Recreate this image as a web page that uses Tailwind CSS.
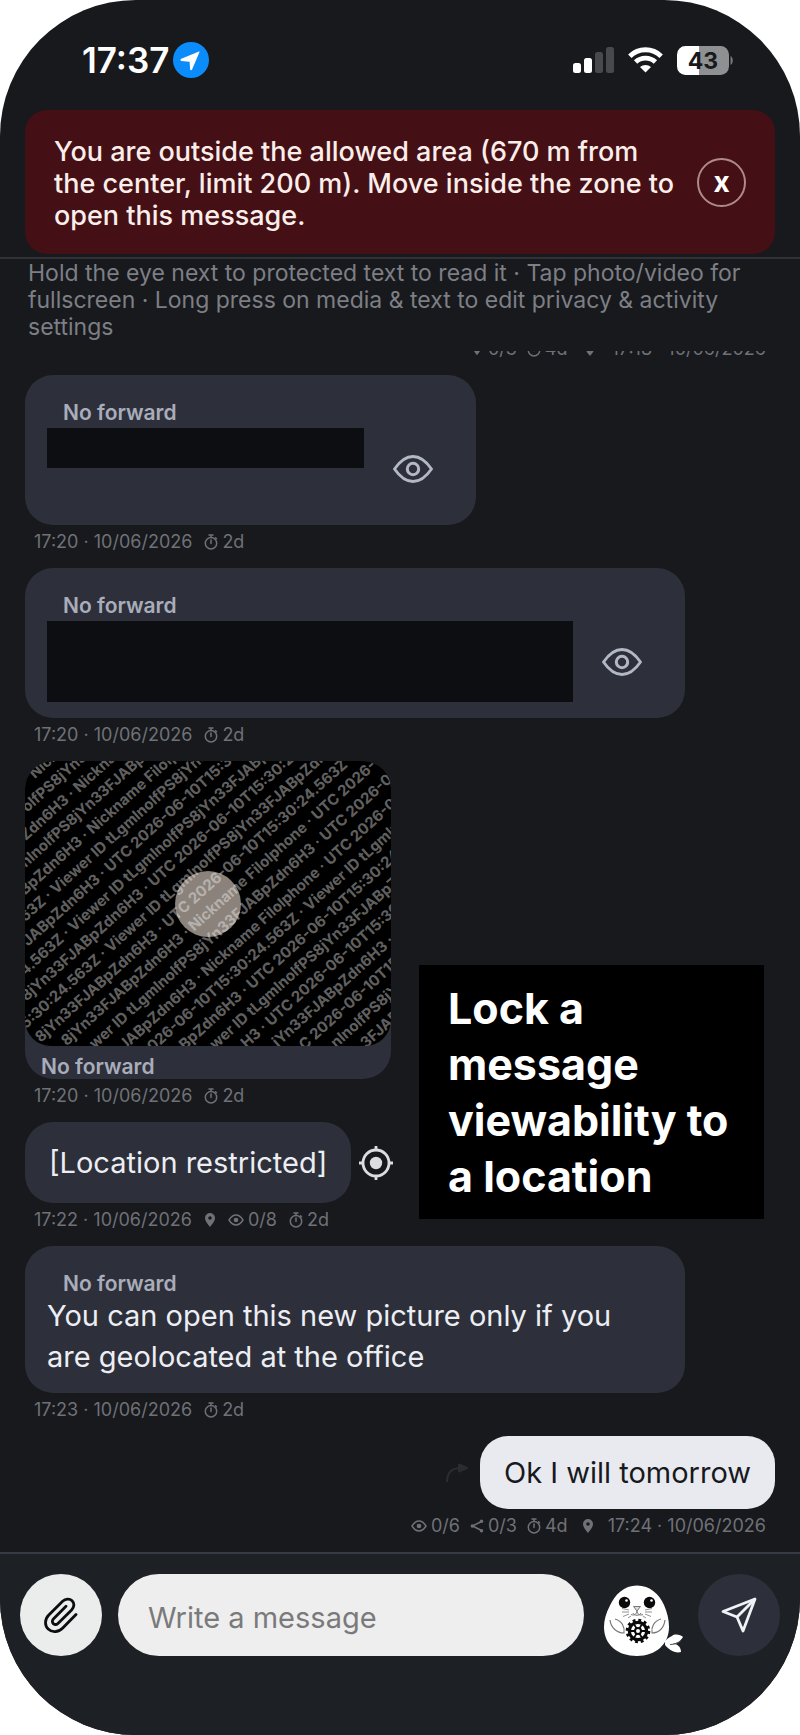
<!DOCTYPE html>
<html lang="en">
<head>
    <meta charset="UTF-8">
    <meta name="viewport" content="width=device-width, initial-scale=1.0">
    <title>Chat</title>
    <script src="https://cdn.jsdelivr.net/npm/@tailwindcss/browser@4"></script>
</head>
<body class="bg-white font-['Inter','Liberation_Sans',sans-serif]">
    <!-- shared icons -->
    <svg class="hidden" aria-hidden="true">
        <symbol id="eye" viewBox="0 0 40 28">
            <path d="M1.500 14C7 6 13 1.500 20 1.500S33 6 38.500 14C33 22 27 26.500 20 26.500S7 22 1.500 14Z" fill="none" stroke="currentColor" stroke-width="2.900" stroke-linejoin="round"/>
            <circle cx="20" cy="14" r="5.700" fill="none" stroke="currentColor" stroke-width="3"/>
        </symbol>
        <symbol id="eye-small" viewBox="0 0 16 12">
            <path d="M1 6C3 2.800 5.300 1 8 1s5 1.800 7 5c-2 3.200-4.300 5-7 5S3 9.200 1 6Z" fill="none" stroke="currentColor" stroke-width="1.500" stroke-linejoin="round"/>
            <circle cx="8" cy="6" r="2.300" fill="currentColor"/>
        </symbol>
        <symbol id="timer" viewBox="0 0 14 16">
            <circle cx="7" cy="9.300" r="5.700" fill="none" stroke="currentColor" stroke-width="1.500"/>
            <path d="M5 1h4M7 1v2.500M7 6v3.500M11.500 3.800l1 1" fill="none" stroke="currentColor" stroke-width="1.500" stroke-linecap="round"/>
        </symbol>
        <symbol id="pin" viewBox="0 0 12 16">
            <path fill-rule="evenodd" d="M6 1a5 5 0 0 0-5 5c0 3.500 5 9 5 9s5-5.500 5-9a5 5 0 0 0-5-5Zm0 3.200a1.800 1.800 0 1 1 0 3.600 1.800 1.800 0 0 1 0-3.600Z" fill="currentColor"/>
        </symbol>
        <symbol id="share" viewBox="0 0 14 14">
            <path d="M11.500 2.500 2.500 7l9 4.500" fill="none" stroke="currentColor" stroke-width="1.500"/>
            <circle cx="11.500" cy="2.300" r="1.700" fill="currentColor"/>
            <circle cx="2.300" cy="7" r="1.700" fill="currentColor"/>
            <circle cx="11.500" cy="11.700" r="1.700" fill="currentColor"/>
        </symbol>
    </svg>

    <div class="min-h-screen flex flex-col rounded-[136px] overflow-hidden bg-[#17191d] text-[#eceef3]">

        <!-- status bar -->
        <div class="h-[110px] pl-[82px] pr-[66px] flex items-center justify-between">
            <div class="flex items-center gap-1 pt-2.5">
                <span class="text-[35px] leading-10 font-semibold text-white">17:37</span>
                <svg class="size-9" viewBox="0 0 36 36">
                    <circle cx="18" cy="18" r="18" fill="#0b8cfb"/>
                    <path d="M26 9.500 8.300 16.800c-1.200.5-1.100 2 .1 2.100l8.200.8.500 7.600c.1 1.200 1.500 1.400 2 .3L26.500 10c.2-.4-.1-.7-.5-.5Z" fill="#fff"/>
                </svg>
            </div>
            <div class="flex items-center gap-[14px] pt-2.5">
                <svg class="w-[41px] h-[26px]" viewBox="0 0 41 26">
                    <rect x="0" y="16" width="8" height="10" rx="2.500" fill="#fff"/>
                    <rect x="11" y="11" width="8" height="15" rx="2.500" fill="#fff"/>
                    <rect x="22" y="5" width="8" height="21" rx="2.500" fill="#47494c"/>
                    <rect x="33" y="0" width="8" height="26" rx="2.500" fill="#47494c"/>
                </svg>
                <svg class="w-[35px] h-[26px]" viewBox="0 0 35 26" fill="none" stroke="#fff" stroke-width="4.800">
                    <path d="M1.800 9.200C10.500.6 24.500.6 33.200 9.200"/>
                    <path d="M7.600 15c5.500-5.300 14.300-5.300 19.800 0"/>
                    <path d="M17.500 25.500 12 20c3.200-2.800 7.800-2.800 11 0Z" fill="#fff" stroke="none"/>
                </svg>
                <svg class="w-[57px] h-[29px]" viewBox="0 0 57 29">
                    <path d="M8.500 0H22v29H8.500A8.500 8.500 0 0 1 0 20.500v-12A8.500 8.500 0 0 1 8.500 0Z" fill="#fff"/>
                    <path d="M22 0h21.500A8.500 8.500 0 0 1 52 8.500v12a8.500 8.500 0 0 1-8.500 8.500H22Z" fill="#8f9092"/>
                    <path d="M53.500 10c3 1 3 8 0 9Z" fill="#77787b"/>
                    <text x="26" y="22.500" text-anchor="middle" font-size="23" font-weight="700" fill="#17191d">43</text>
                </svg>
            </div>
        </div>

        <!-- out of zone alert -->
        <div role="alert" class="mx-[25px] py-6 pl-[29px] pr-[29px] rounded-[22px] bg-[#441015] flex items-center gap-3">
            <p class="flex-1 pt-0.5 -mb-0.5 text-[27px] leading-8 font-medium text-[#fbeeea]">You are outside the allowed area (670 m from<br>the center, limit 200 m). Move inside the zone to open this message.</p>
            <button type="button" aria-label="Close" class="size-[49px] shrink-0 rounded-full border-2 border-[#b08a8b] text-[28px] leading-none font-bold text-white">x</button>
        </div>

        <div class="mt-[3px] border-t-2 border-[#303237] px-[28px] pt-px pb-[9px]">
            <p class="text-[23px] leading-[27px] text-[#7d7f85]">Hold the eye next to protected text to read it · Tap photo/video for fullscreen · Long press on media &amp; text to edit privacy &amp; activity settings</p>
        </div>

        <main class="relative flex flex-col gap-4 px-[25px] pt-px pb-4">
            <!-- message scrolled under the hint -->
            <div class="h-[8px] px-[9px] overflow-hidden flex items-end justify-end gap-2.5 text-[18px] leading-5 text-[#6f7177]">
                <span class="flex items-center gap-1"><svg class="size-[14px]"><use href="#pin"/></svg>0/3</span>
                <span class="flex items-center gap-1"><svg class="w-[14px] h-4"><use href="#timer"/></svg>4d</span>
                <svg class="w-3 h-4 mx-1.5 mb-0.5"><use href="#pin"/></svg>
                <span>17:18 · 10/06/2026</span>
            </div>

            <article class="flex flex-col items-start gap-[7px]">
                <div class="pt-6 pb-4 pl-[22px] pr-[30px] rounded-[28px] bg-[#2d303a]">
                    <p class="pl-4 pb-0.5 text-[21px] leading-[27px] font-semibold text-[#a9adba]">No forward</p>
                    <div class="flex gap-4">
                        <div class="w-[317px] h-10 bg-[#0d0e12]"></div>
                        <button type="button" aria-label="Show text" class="w-[66px] h-[81px] flex items-center justify-center text-[#b3b8c6]"><svg class="w-10 h-7"><use href="#eye"/></svg></button>
                    </div>
                </div>
                <div class="px-[9px] flex items-center gap-3 text-[18px] leading-5 text-[#6f7177]">
                    <span>17:20 · 10/06/2026</span>
                    <span class="flex items-center gap-1"><svg class="w-[14px] h-4"><use href="#timer"/></svg>2d</span>
                </div>
            </article>

            <article class="flex flex-col items-start gap-[7px]">
                <div class="w-[88%] pt-6 pb-4 pl-[22px] pr-[30px] rounded-[28px] bg-[#2d303a]">
                    <p class="pl-4 pb-0.5 text-[21px] leading-[27px] font-semibold text-[#a9adba]">No forward</p>
                    <div class="flex gap-4">
                        <div class="flex-1 h-[81px] bg-[#0d0e12]"></div>
                        <button type="button" aria-label="Show text" class="w-[66px] h-[81px] flex items-center justify-center text-[#b3b8c6]"><svg class="w-10 h-7"><use href="#eye"/></svg></button>
                    </div>
                </div>
                <div class="px-[9px] flex items-center gap-3 text-[18px] leading-5 text-[#6f7177]">
                    <span>17:20 · 10/06/2026</span>
                    <span class="flex items-center gap-1"><svg class="w-[14px] h-4"><use href="#timer"/></svg>2d</span>
                </div>
            </article>

            <article class="flex flex-col items-start gap-[7px]">
                <div class="w-[366px] rounded-[28px] overflow-hidden bg-[#2d303a]">
                    <!-- media with watermark -->
                    <svg class="block w-full h-auto rounded-[26px] bg-black" viewBox="0 0 366 285">
                        <circle cx="183" cy="143" r="33" fill="#8a827b"/>
                        <g transform="rotate(-42)" font-size="15" font-weight="700" fill="#fff" fill-opacity=".4">
                            <text x="-5" y="20">Nickname</text>
                            <text x="-33" y="40">olfPS8jYn33FJAB</text>
                            <text x="-53" y="60">Zdn6H3 · Nickname Filolphone</text>
                            <text x="-71" y="80">nlnolfPS8jYn33FJABpZdn6H3</text>
                            <text x="-90" y="100">BpZdn6H3 · Nickname Filolphone</text>
                            <text x="-108" y="120">63Z · Viewer ID tLgmlnolfPS8jYn33FJAB</text>
                            <text x="-122" y="140">JABpZdn6H3 · UTC 2026-06-10T15:30:24</text>
                            <text x="-144" y="160">4.563Z · Viewer ID tLgmlnolfPS8jYn33FJABpZdn6H3</text>
                            <text x="-160" y="180">8jYn33FJABpZdn6H3 · UTC 2026-06-10T15:30:24.563Z</text>
                            <text x="-179" y="200">5:30:24.563Z · Viewer ID tLgmlnolfPS8jYn33FJABpZdn6H3</text>
                            <text x="-177" y="220">8jYn33FJABpZdn6H3 · UTC 2026-06-10T15:30:24.563Z</text>
                            <text x="-160" y="240">8jYn33FJABpZdn6H3 · Nickname Filolphone · UTC 2026-06</text>
                            <text x="-141" y="261">wer ID tLgmlnolfPS8jYn33FJABpZdn6H3 · UTC 2026-06-10</text>
                            <text x="-120" y="282">JABpZdn6H3 · Nickname Filolphone · UTC 2026-06-10</text>
                            <text x="-100" y="302">026-06-10T15:30:24.563Z · Viewer ID tLgmlnolf</text>
                            <text x="-75" y="322">BpZdn6H3 · UTC 2026-06-10T15:30:24.563Z</text>
                            <text x="-52" y="342">wer ID tLgmlnolfPS8jYn33FJABpZdn6H3</text>
                            <text x="-28" y="362">H3 · UTC 2026-06-10T15:30:24</text>
                            <text x="-4" y="382">jYn33FJABpZdn6H3 · UTC</text>
                            <text x="14" y="402">C 2026-06-10T15:30</text>
                            <text x="39" y="422">nlnolfPS8jYn</text>
                            <text x="61" y="442">3FJABp</text>
                        </g>
                    </svg>
                    <p class="pt-[9px] pl-4 text-[21px] leading-6 font-semibold text-[#a9adba]">No forward</p>
                </div>
                <div class="px-[9px] flex items-center gap-3 text-[18px] leading-5 text-[#6f7177]">
                    <span>17:20 · 10/06/2026</span>
                    <span class="flex items-center gap-1"><svg class="w-[14px] h-4"><use href="#timer"/></svg>2d</span>
                </div>
            </article>

            <article class="flex flex-col items-start gap-[7px]">
                <div class="flex items-center gap-2">
                    <p class="px-6 py-5 rounded-[28px] bg-[#2d303a] text-[29px] leading-[41px]">[Location restricted]</p>
                    <button type="button" aria-label="Check location">
                        <svg class="size-[34px]" viewBox="0 0 34 34" fill="none" stroke="#dcdde1" stroke-width="2.800">
                            <circle cx="17" cy="17" r="13"/>
                            <circle cx="17" cy="17" r="6.200" fill="#dcdde1" stroke="none"/>
                            <path d="M17 0v5M17 29v5M0 17h5M29 17h5"/>
                        </svg>
                    </button>
                </div>
                <div class="px-[9px] flex items-center gap-3 text-[18px] leading-5 text-[#6f7177]">
                    <span>17:22 · 10/06/2026</span>
                    <svg class="w-3 h-4"><use href="#pin"/></svg>
                    <span class="flex items-center gap-1"><svg class="w-4 h-3"><use href="#eye-small"/></svg>0/8</span>
                    <span class="flex items-center gap-1"><svg class="w-[14px] h-4"><use href="#timer"/></svg>2d</span>
                </div>
            </article>

            <article class="flex flex-col items-start gap-[7px]">
                <div class="w-[88%] pt-6 pb-4 px-[22px] rounded-[28px] bg-[#2d303a]">
                    <p class="pl-4 pb-0.5 text-[21px] leading-[27px] font-semibold text-[#a9adba]">No forward</p>
                    <p class="-mt-1 max-w-[590px] text-[29px] leading-[41px]">You can open this new picture only if you are geolocated at the office</p>
                </div>
                <div class="px-[9px] flex items-center gap-3 text-[18px] leading-5 text-[#6f7177]">
                    <span>17:23 · 10/06/2026</span>
                    <span class="flex items-center gap-1"><svg class="w-[14px] h-4"><use href="#timer"/></svg>2d</span>
                </div>
            </article>

            <article class="flex flex-col items-end gap-[7px]">
                <div class="flex items-center gap-3">
                    <svg class="w-[22px] h-5" viewBox="0 0 22 20" fill="none" stroke="#2a2c30" stroke-width="2">
                        <path d="M1 19C1 10 6 5 15 5"/>
                        <path d="M13 1.500 21 5l-8 3.500Z" fill="#2a2c30" stroke-linejoin="round"/>
                    </svg>
                    <p class="px-6 py-4 rounded-[28px] bg-[#e9eaef] text-[29px] leading-[41px] text-[#17191d]">Ok I will tomorrow</p>
                </div>
                <div class="px-[9px] flex items-center gap-2.5 text-[18px] leading-5 text-[#6f7177]">
                    <span class="flex items-center gap-1"><svg class="w-4 h-3"><use href="#eye-small"/></svg>0/6</span>
                    <span class="flex items-center gap-1"><svg class="size-[14px]"><use href="#share"/></svg>0/3</span>
                    <span class="flex items-center gap-1"><svg class="w-[14px] h-4"><use href="#timer"/></svg>4d</span>
                    <svg class="w-3 h-4 mx-1"><use href="#pin"/></svg>
                    <span>17:24 · 10/06/2026</span>
                </div>
            </article>

            <!-- caption laid over the conversation -->
            <div class="absolute top-[615px] right-9 w-[345px] px-[29px] pt-[15px] pb-[15px] bg-black text-[43px] leading-[56px] font-bold text-white">Lock a message viewability to a location</div>
        </main>

        <!-- composer -->
        <form class="flex-1 border-t-2 border-[#373a44] bg-[#1d2024] px-5 pt-5 flex items-start gap-4">
            <button type="button" aria-label="Attach a file" class="size-[82px] shrink-0 rounded-full bg-[#ebecec] flex items-center justify-center">
                <svg class="size-9" viewBox="0 0 36 36" fill="none" stroke="#0c0d10" stroke-width="2.800" stroke-linecap="round" stroke-linejoin="round">
                    <path d="M33 17.500 19.500 31.200c-4.200 4.200-10.500 4.500-14.300.8s-3.500-9.800.6-14L19.600 4.300c2.900-2.800 7-3 9.500-.6s2.300 6.400-.5 9.200L15.200 26.200c-1.500 1.500-3.600 1.600-4.900.4s-1.200-3.400.3-4.900L23 9.300"/>
                </svg>
            </button>
            <input type="text" aria-label="Message" placeholder="Write a message" class="flex-1 min-w-0 h-[82px] px-[30px] pt-1 rounded-full bg-[#eeeeef] text-[29px] text-[#17191d] placeholder:text-[#7a7a7b]">
            <button type="button" aria-label="Seal settings" class="w-[82px] h-[82px] shrink-0 ml-1">
                <svg class="w-[82px] h-[82px]" viewBox="0 0 82 82">
                    <path d="M61 67c3-3 5-4 7-5 3-3 9-1 11 1-3 5-8 7-12 7 5-1 10 2 10 8-6 2-13-3-16-7Z" fill="#fff"/>
                    <path d="M66 70.500c4 0 8-1 11-4" fill="none" stroke="#55585c" stroke-width="1"/>
                    <path d="M33 11.500c-13 0-22 9-27 20C2 39 0 46 0 53c0 18 14 29 33 29s32-12 32-29c0-8-2-15-5-22-5-11-14-19.500-27-19.500Z" fill="#fff"/>
                    <g fill="#0a0a0a"><circle cx="20.500" cy="28.500" r="5.700"/><circle cx="45.500" cy="28.500" r="5.700"/></g>
                    <g fill="#fff"><circle cx="22.500" cy="26.500" r="1.300"/><circle cx="47.500" cy="26.500" r="1.300"/></g>
                    <g fill="none" stroke="#777" stroke-width="1">
                        <path d="M29.500 32.500h7L33 37Z" fill="#ddd"/>
                        <path d="M33 37c0 3-3 5-6 3.500M33 37c0 3 3 5 6 3.500M29 39c1 3 7 3 8 0"/>
                        <path d="m25 36-7-1.500M25 38h-7M25 40l-6 2.500M41 36l7-1.500M41 38h7M41 40l6 2.500M27 42l-3 2M39 42l3 2" stroke-width=".8"/>
                        <path d="M6 46c1 8 7 13 14 13 1-6-2-12-9-14M61 46c-1 8-6 13-13 13-1-6 2-12 9-14" stroke-width="1.200"/>
                    </g>
                    <g transform="translate(34 57)">
                        <circle r="8.700" fill="none" stroke="#0a0a0a" stroke-width="3.200"/>
                        <circle r="10.800" fill="none" stroke="#0a0a0a" stroke-width="3" stroke-dasharray="2.827 2.827"/>
                        <circle r="3" fill="none" stroke="#0a0a0a" stroke-width="2"/>
                        <path d="M3 0h6M-3 0h-6M1.500 2.600l3 5.200M-1.500-2.600l-3-5.200M-1.500 2.600l-3 5.200M1.500-2.600l3-5.200" stroke="#0a0a0a" stroke-width="1.800"/>
                    </g>
                </svg>
            </button>
            <button type="submit" aria-label="Send" class="size-[82px] shrink-0 -ml-1 rounded-full bg-[#2d303a] flex items-center justify-center">
                <svg class="size-9" viewBox="0 0 36 36" fill="none" stroke="#f1f2f6" stroke-width="2.800" stroke-linejoin="round">
                    <path d="M34 2 2 14.500l14 5.500 6 14Z"/>
                    <path d="M34 2 16 20"/>
                </svg>
            </button>
        </form>
    </div>
</body>
</html>
